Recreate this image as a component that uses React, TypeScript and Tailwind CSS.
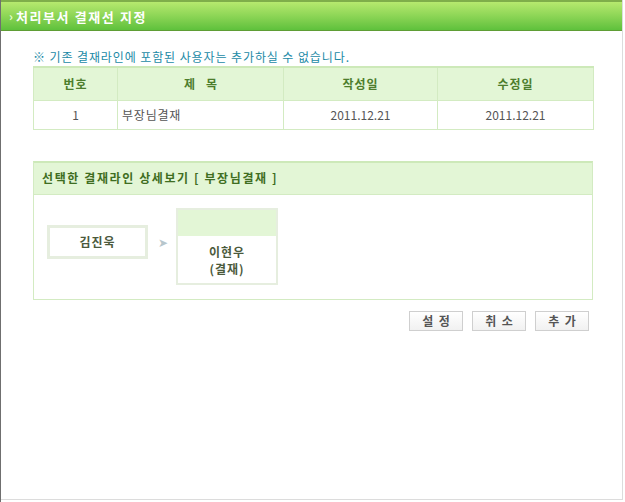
import React from "react";

const rows = [{ no: "1", title: "부장님결재", created: "2011.12.21", updated: "2011.12.21" }];

export default function App() {
  return (
    <div
      className="w-[625px] h-[502px] bg-white border-l border-[#6f6f6f] text-[12px] text-[#333]"
      style={{ fontFamily: '"Noto Sans CJK KR", "Noto Sans", sans-serif' }}
    >
      <div className="w-[622px] h-[500px] border-r border-b border-[#dcdcdc]">
        {/* Title bar */}
        <div className="h-[31px] flex items-center pl-[8px] border-t-2 border-t-[#7fae4a] border-b border-b-[#5f9d35] bg-gradient-to-b from-[#b6e96e] to-[#5ec13c]">
          <span className="text-[#e8ffd0] text-[12px] font-bold mr-[3px] leading-none">›</span>
          <span className="text-white text-[13px] font-bold tracking-[1.6px] leading-none">처리부서 결재선 지정</span>
        </div>

        <div className="px-[32px]">
          <p className="mt-[19px] text-[12px] text-[#1b8aa6] leading-[14px] tracking-[0.9px]">※ 기존 결재라인에 포함된 사용자는 추가하실 수 없습니다.</p>

          {/* List table */}
          <table className="mt-[2px] w-[560px] border-collapse border-t-2 border-t-[#cde9b9] table-fixed">
            <colgroup>
              <col className="w-[84px]" />
              <col className="w-[166px]" />
              <col className="w-[154px]" />
              <col className="w-[156px]" />
            </colgroup>
            <thead>
              <tr className="h-[33px] bg-[#e3f6d6]">
                <th className="border border-[#d3ebc2] text-[#4d7d2c] font-bold text-[12px] tracking-[1px]">번호</th>
                <th className="border border-[#d3ebc2] text-[#4d7d2c] font-bold text-[12px]">제&nbsp;&nbsp;&nbsp;&nbsp;목</th>
                <th className="border border-[#d3ebc2] text-[#4d7d2c] font-bold text-[12px] tracking-[1px]">작성일</th>
                <th className="border border-[#d3ebc2] text-[#4d7d2c] font-bold text-[12px] tracking-[1px]">수정일</th>
              </tr>
            </thead>
            <tbody>
              {rows.map((r) => (
                <tr key={r.no} className="h-[29px]">
                  <td className="border border-[#d3ebc2] text-center text-[#555]">{r.no}</td>
                  <td className="border border-[#d3ebc2] pl-[4px] text-[#555] tracking-[0.8px]">{r.title}</td>
                  <td className="border border-[#d3ebc2] text-center text-[#555]">{r.created}</td>
                  <td className="border border-[#d3ebc2] text-center text-[#555]">{r.updated}</td>
                </tr>
              ))}
            </tbody>
          </table>

          {/* Detail box */}
          <div className="mt-[31px] w-[560px] border border-[#d3ebc2] border-t-2 border-t-[#cde9b9]">
            <div className="h-[32px] bg-[#e3f6d6] border-b border-[#d3ebc2] flex items-center pl-[8px]">
              <span className="font-bold text-[12px] text-[#3f6e22] tracking-[1.6px]">선택한 결재라인 상세보기 [ 부장님결재 ]</span>
            </div>
            <div className="h-[104px] flex items-center pl-[13px]">
              <div className="w-[101px] h-[34px] border-[3px] border-[#e6eedf] flex items-center justify-center -mt-[10px]">
                <span className="font-bold text-[#4b5a3c] tracking-[1px]">김진욱</span>
              </div>
              <span className="ml-[10px] mr-[8px] text-[#b7c6cc] text-[12px] -mt-[10px]">➤</span>
              <div className="w-[102px] h-[77px] border-[2px] border-[#e6eedf] flex flex-col">
                <div className="h-[26px] bg-[#e3f6d6]" />
                <div className="flex-1 flex flex-col items-center justify-center leading-[17px] font-bold text-[#4b5a3c] tracking-[1px]">
                  <span>이현우</span>
                  <span>(결재)</span>
                </div>
              </div>
            </div>
          </div>

          {/* Buttons */}
          <div className="mt-[11px] w-[556px] flex justify-end gap-[9px]">
            {["설 정", "취 소", "추 가"].map((b) => (
              <button
                key={b}
                className="w-[54px] h-[20px] border border-[#cfcfcf] bg-gradient-to-b from-white to-[#f1f1f1] text-[12px] font-bold text-[#555] leading-none whitespace-pre"
              >
                {b.replace(" ", "  ")}
              </button>
            ))}
          </div>
        </div>
      </div>
    </div>
  );
}
